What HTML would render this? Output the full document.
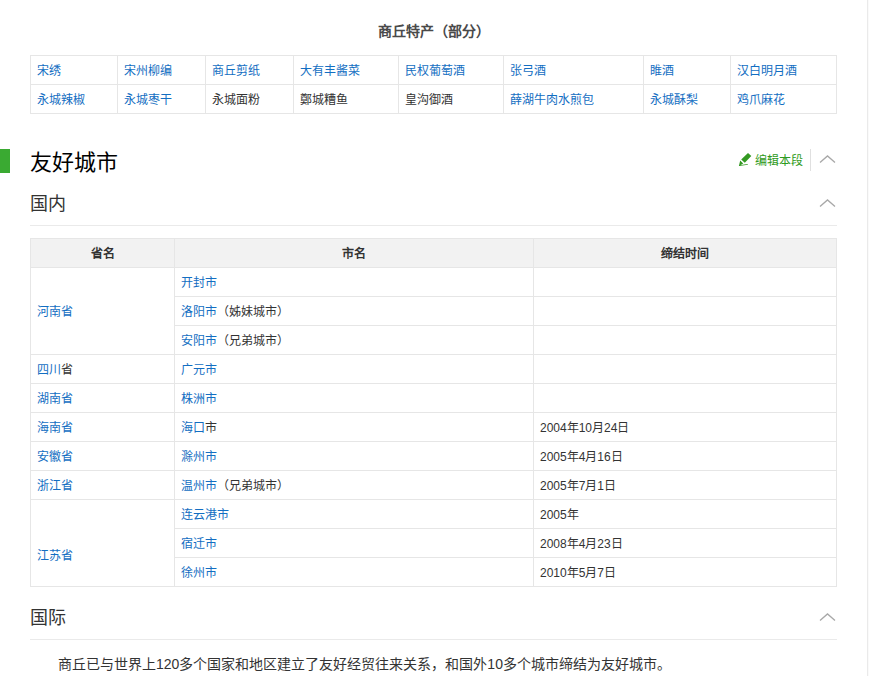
<!DOCTYPE html>
<html lang="zh-CN"><head><meta charset="utf-8"><style>
html,body{margin:0;padding:0;background:#fff;}
body{width:869px;height:676px;overflow:hidden;position:relative;font-family:"Liberation Sans",sans-serif;color:#333;}
a{color:#136ec2;text-decoration:none;}
.rline{position:absolute;left:867px;top:0;width:1px;height:676px;background:#eaeaea;}
.rline2{position:absolute;left:868px;top:0;width:1px;height:676px;background:#fafafa;}
.cap{position:absolute;left:30px;top:22px;width:807px;text-align:center;font-size:14px;font-weight:bold;line-height:18px;color:#4a4a4a;}
table{border-collapse:collapse;table-layout:fixed;position:absolute;font-size:12px;}
td,th{border:1px solid #e6e6e6;padding:1px 6px 0;height:27px;line-height:18px;text-align:left;white-space:nowrap;overflow:hidden;}
th{background:#f2f2f2;text-align:center;font-weight:bold;color:#333;}
#t1{left:30px;top:55px;}
#t2{left:30px;top:238px;}
.bar{position:absolute;left:0;top:149px;width:10px;height:24px;background:#3aaa32;}
.h2{position:absolute;left:30px;top:148px;font-size:22px;line-height:30px;color:#000;}
.edit{position:absolute;left:755px;top:152px;font-size:12px;line-height:18px;color:#2e9a20;}
.sep{position:absolute;left:810px;top:149px;width:1px;height:22px;background:#e0e0e0;}
.chev{position:absolute;}
.h3{position:absolute;left:30px;font-size:18px;line-height:24px;color:#333;}
.hl{position:absolute;left:30px;width:807px;height:1px;background:#eaeaea;}
.para{position:absolute;left:58px;top:654px;font-size:14px;line-height:20px;color:#333;white-space:nowrap;}
</style></head><body>
<div class="rline"></div><div class="rline2"></div>
<div class="cap">商丘特产（部分）</div>
<table id="t1">
<colgroup><col style="width:87px"><col style="width:88px"><col style="width:88px"><col style="width:105px"><col style="width:105px"><col style="width:140px"><col style="width:87px"><col style="width:106px"></colgroup>
<tr><td><a>宋绣</a></td><td><a>宋州柳编</a></td><td><a>商丘剪纸</a></td><td><a>大有丰酱菜</a></td><td><a>民权葡萄酒</a></td><td><a>张弓酒</a></td><td><a>睢酒</a></td><td><a>汉白明月酒</a></td></tr>
<tr><td><a>永城辣椒</a></td><td><a>永城枣干</a></td><td>永城面粉</td><td>鄭城糟鱼</td><td>皇沟御酒</td><td><a>薛湖牛肉水煎包</a></td><td><a>永城酥梨</a></td><td><a>鸡爪麻花</a></td></tr>
</table>

<div class="bar"></div>
<div class="h2">友好城市</div>
<svg class="chev" style="left:738px;top:151px" width="15" height="16" viewBox="0 0 15 16"><path fill="#339922" d="M10 1.9 L13.3 5.1 L6.8 11.7 L3.2 8.4 Z M2.2 9.6 L5.2 12.6 L0.9 15 Z M1 14.3 L9.8 13.1 L9.8 13.7 L1 15.1Z"/></svg>
<div class="edit">编辑本段</div>
<div class="sep"></div>
<svg class="chev" style="left:819px;top:153px" width="17" height="11" viewBox="0 0 17 11"><path d="M1 9.6 L8.5 2.9 L16 9.6" fill="none" stroke="#a8a8a8" stroke-width="1.3"/></svg>

<div class="h3" style="top:192px">国内</div>
<svg class="chev" style="left:819px;top:197px" width="17" height="11" viewBox="0 0 17 11"><path d="M1 9.6 L8.5 2.9 L16 9.6" fill="none" stroke="#a8a8a8" stroke-width="1.3"/></svg>
<div class="hl" style="top:225px"></div>

<table id="t2">
<colgroup><col style="width:144px"><col style="width:359px"><col style="width:303px"></colgroup>
<tr><th>省名</th><th>市名</th><th>缔结时间</th></tr>
<tr><td rowspan="3"><a>河南省</a></td><td><a>开封市</a></td><td></td></tr>
<tr><td><a>洛阳市</a>（姊妹城市）</td><td></td></tr>
<tr><td><a>安阳市</a>（兄弟城市）</td><td></td></tr>
<tr><td><a>四川</a>省</td><td><a>广元市</a></td><td></td></tr>
<tr><td><a>湖南省</a></td><td><a>株洲市</a></td><td></td></tr>
<tr><td><a>海南省</a></td><td><a>海口</a>市</td><td>2004年10月24日</td></tr>
<tr><td><a>安徽省</a></td><td><a>滁州市</a></td><td>2005年4月16日</td></tr>
<tr><td><a>浙江省</a></td><td><a>温州市</a>（兄弟城市）</td><td>2005年7月1日</td></tr>
<tr><td rowspan="3" style="padding-top:26px"><a>江苏省</a></td><td><a>连云港市</a></td><td>2005年</td></tr>
<tr><td><a>宿迁市</a></td><td>2008年4月23日</td></tr>
<tr><td><a>徐州市</a></td><td>2010年5月7日</td></tr>
</table>

<div class="h3" style="top:606px">国际</div>
<svg class="chev" style="left:819px;top:611px" width="17" height="11" viewBox="0 0 17 11"><path d="M1 9.6 L8.5 2.9 L16 9.6" fill="none" stroke="#a8a8a8" stroke-width="1.3"/></svg>
<div class="hl" style="top:639px"></div>
<div class="para">商丘已与世界上120多个国家和地区建立了友好经贸往来关系，和国外10多个城市缔结为友好城市。</div>
</body></html>
